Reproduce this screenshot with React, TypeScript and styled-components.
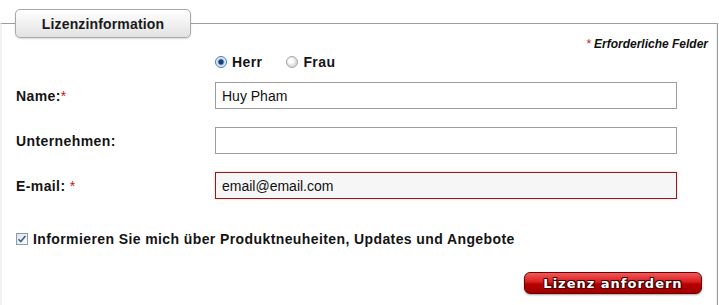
import styled, { createGlobalStyle } from "styled-components";

const GlobalStyle = createGlobalStyle`
  html, body {
    margin: 0;
    padding: 0;
    background: #ffffff;
  }
  body {
    font-family: "Liberation Sans", Arial, sans-serif;
    color: #141414;
  }
`;

export default function App() {
  return (
    <>
      <GlobalStyle />
      <Panel>
        <Legend>Lizenzinformation</Legend>
        <Required>
          <Star>*</Star> Erforderliche Felder
        </Required>

        <RadioGroup>
          <RadioOption>
            <Radio $checked />
            Herr
          </RadioOption>
          <RadioOption>
            <Radio />
            Frau
          </RadioOption>
        </RadioGroup>

        <Fields>
          <Label>
            Name:<Star>*</Star>
          </Label>
          <TextField defaultValue="Huy Pham" />

          <Label>Unternehmen:</Label>
          <TextField defaultValue="" />

          <Label>
            E-mail: <Star>*</Star>
          </Label>
          <TextField $invalid defaultValue="email@email.com" />
        </Fields>

        <CheckRow>
          <CheckBox>
            <svg width="10" height="10" viewBox="0 0 10 10">
              <path
                d="M1.5 5.2 L3.8 7.6 L8.4 2"
                fill="none"
                stroke="#3a5fa3"
                strokeWidth="1.6"
              />
            </svg>
          </CheckBox>
          Informieren Sie mich über Produktneuheiten, Updates und Angebote
        </CheckRow>

        <Actions>
          <SubmitButton type="button">Lizenz anfordern</SubmitButton>
        </Actions>
      </Panel>
    </>
  );
}

const Panel = styled.div`
  margin: 23px 1px 0 0;
  min-height: 290px;
  border-top: 1px solid #9e9e9e;
  border-right: 1px solid #9e9e9e;
  border-left: 2px solid #f1f1f1;
  box-shadow: inset -1px 0 0 #ececec;
  padding: 0 9px 0 14px;
`;

const Legend = styled.div`
  box-sizing: border-box;
  width: 176px;
  height: 29px;
  margin: -15px 0 0 -1px;
  display: flex;
  align-items: center;
  justify-content: center;
  border: 1px solid #a9a9a9;
  border-radius: 5px;
  background: linear-gradient(#ffffff, #e2e2e2);
  box-shadow: 0 1px 2px rgba(0, 0, 0, 0.15);
  font-size: 14px;
  font-weight: bold;
  letter-spacing: 0.15px;
  color: #1a1a1a;
`;

const Required = styled.div`
  margin-top: -1px;
  text-align: right;
  font-size: 12px;
  line-height: 14px;
  font-weight: bold;
  font-style: italic;
  color: #111;
`;

const Star = styled.span`
  color: #c41a1a;
  font-weight: normal;
`;

const RadioGroup = styled.div`
  margin: 3px 0 0 199px;
  height: 16px;
  display: flex;
  align-items: center;
  gap: 24px;
`;

const RadioOption = styled.label`
  display: flex;
  align-items: center;
  gap: 5px;
  font-size: 14px;
  font-weight: bold;
  letter-spacing: 0.4px;
`;

const Radio = styled.span<{ $checked?: boolean }>`
  box-sizing: border-box;
  width: 12px;
  height: 12px;
  border-radius: 50%;
  border: 1px solid ${(p) => (p.$checked ? "#4a78b0" : "#a7a7a7")};
  background: ${(p) =>
    p.$checked
      ? "radial-gradient(circle, #1d3f78 0 2.2px, #7aa6d8 2.8px, #e8eef6 4px)"
      : "radial-gradient(circle at 40% 40%, #ffffff 0 2px, #dcdcdc 5px)"};
`;

const Fields = styled.div`
  margin-top: 12px;
  display: grid;
  grid-template-columns: 199px 462px;
  grid-auto-rows: 27px;
  row-gap: 18px;
  align-items: center;
`;

const Label = styled.label`
  font-size: 14px;
  font-weight: bold;
  letter-spacing: 0.4px;
  color: #141414;
`;

const TextField = styled.input<{ $invalid?: boolean }>`
  box-sizing: border-box;
  width: 462px;
  height: 27px;
  padding: 0 6px;
  border: 1px solid ${(p) => (p.$invalid ? "#8e1c1c" : "#9d9d9d")};
  background: ${(p) => (p.$invalid ? "#f6f6f6" : "#ffffff")};
  box-shadow: ${(p) => (p.$invalid ? "0 0 2px rgba(220, 60, 60, 0.35)" : "none")};
  font-family: "Liberation Sans", Arial, sans-serif;
  font-size: 14px;
  color: #111;
  outline: none;
`;

const CheckRow = styled.label`
  margin-top: 32px;
  height: 16px;
  display: flex;
  align-items: center;
  gap: 5px;
  font-size: 14px;
  font-weight: bold;
  letter-spacing: 0.4px;
`;

const CheckBox = styled.span`
  box-sizing: border-box;
  width: 12px;
  height: 12px;
  display: flex;
  align-items: center;
  justify-content: center;
  border: 1px solid #8d9bb0;
  background: linear-gradient(135deg, #e2e2e2, #ffffff);
`;

const Actions = styled.div`
  margin-top: 25px;
  display: flex;
  justify-content: flex-end;
  padding-right: 6px;
`;

const SubmitButton = styled.button`
  box-sizing: border-box;
  width: 178px;
  height: 22px;
  padding: 0;
  border: 1px solid #6e0000;
  border-radius: 6px;
  background: linear-gradient(#f05a5a 0%, #d81e1e 45%, #b80000 55%, #a00000 100%);
  box-shadow: 0 1px 2px rgba(0, 0, 0, 0.35);
  color: #ffffff;
  font-family: "DejaVu Sans", Verdana, sans-serif;
  font-size: 13px;
  font-weight: bold;
  letter-spacing: 1px;
  text-shadow: 0 0 1px #3a0000, 1px 1px 0 #4a0000, -1px -1px 0 #4a0000,
    1px -1px 0 #4a0000, -1px 1px 0 #4a0000;
`;
